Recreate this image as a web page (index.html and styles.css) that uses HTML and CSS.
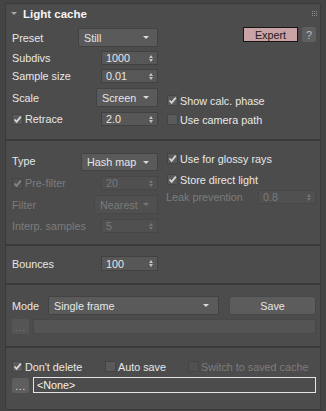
FILE: index.html
```html
<!DOCTYPE html>
<html lang="en">
  <head>
    <meta charset="UTF-8" />
    <title>Light cache</title>
    <link rel="stylesheet" href="styles.css">
  </head>
  <body>
    <div class="panel">
      <div class="rollout-head">
        <span class="caret"></span>
        <span class="title">Light cache</span>
        <svg class="grip" width="5" height="5" viewBox="0 0 5 5">
          <rect x="0" y="0" width="1" height="1" /><rect x="2" y="0" width="1" height="1" /><rect x="4" y="0" width="1" height="1" />
          <rect x="0" y="2" width="1" height="1" /><rect x="2" y="2" width="1" height="1" /><rect x="4" y="2" width="1" height="1" />
          <rect x="0" y="4" width="1" height="1" /><rect x="2" y="4" width="1" height="1" /><rect x="4" y="4" width="1" height="1" />
        </svg>
      </div>

      <!-- basic settings -->
      <div class="section s-basic">
        <div class="col left">
          <div class="field"><span>Preset</span><div class="select w80">Still</div></div>
          <div class="field"><span>Subdivs</span><div class="spinner">1000<span class="arrows"></span></div></div>
          <div class="field"><span>Sample size</span><div class="spinner">0.01<span class="arrows"></span></div></div>
          <div class="field gap5"><span>Scale</span><div class="select w62">Screen</div></div>
          <div class="field gap5">
            <span class="check on"><span class="box"><svg viewBox="0 0 9 9"><path d="M1.5 4.5 L3.6 6.8 L7.8 1.6" /></svg></span>Retrace</span>
            <div class="spinner">2.0<span class="arrows"></span></div>
          </div>
        </div>
        <div class="col right">
          <div class="expert-row">
            <button class="expert">Expert</button>
            <button class="help">?</button>
          </div>
          <span class="check on calc"><span class="box"><svg viewBox="0 0 9 9"><path d="M1.5 4.5 L3.6 6.8 L7.8 1.6" /></svg></span>Show calc. phase</span>
          <span class="check camera"><span class="box"></span>Use camera path</span>
        </div>
      </div>

      <!-- interpolation -->
      <div class="section s-type">
        <div class="col left">
          <div class="field"><span>Type</span><div class="select w76 h18">Hash map</div></div>
          <div class="field gap5 disabled">
            <span class="check on"><span class="box"><svg viewBox="0 0 9 9"><path d="M1.5 4.5 L3.6 6.8 L7.8 1.6" /></svg></span>Pre-filter</span>
            <div class="spinner">20<span class="arrows"></span></div>
          </div>
          <div class="field gap5 disabled"><span>Filter</span><div class="select w64">Nearest</div></div>
          <div class="field gap5 disabled"><span>Interp. samples</span><div class="spinner">5<span class="arrows"></span></div></div>
        </div>
        <div class="col right">
          <span class="check on glossy"><span class="box"><svg viewBox="0 0 9 9"><path d="M1.5 4.5 L3.6 6.8 L7.8 1.6" /></svg></span>Use for glossy rays</span>
          <span class="check on store"><span class="box"><svg viewBox="0 0 9 9"><path d="M1.5 4.5 L3.6 6.8 L7.8 1.6" /></svg></span>Store direct light</span>
          <div class="field leak disabled"><span>Leak prevention</span><div class="spinner w58">0.8<span class="arrows"></span></div></div>
        </div>
      </div>

      <div class="section s-bounces">
        <div class="col left">
          <div class="field"><span>Bounces</span><div class="spinner h15">100<span class="arrows"></span></div></div>
        </div>
      </div>

      <!-- mode / file -->
      <div class="section s-mode">
        <div class="row">
          <span class="mode-label">Mode</span>
          <div class="select mode-select">Single frame</div>
          <button class="save">Save</button>
        </div>
        <div class="row">
          <button class="dots dim">...</button>
          <div class="path"></div>
        </div>
      </div>

      <div class="section s-file">
        <div class="checks">
          <span class="check on"><span class="box"><svg viewBox="0 0 9 9"><path d="M1.5 4.5 L3.6 6.8 L7.8 1.6" /></svg></span>Don't delete</span>
          <span class="check"><span class="box"></span>Auto save</span>
          <span class="check disabled"><span class="box"></span>Switch to saved cache</span>
        </div>
        <div class="row">
          <button class="dots">...</button>
          <div class="path none">&lt;None&gt;</div>
        </div>
      </div>
    </div>
  </body>
</html>
```

FILE: styles.css
```css
body {
  margin: 0;
  background-color: #444444;
  font-family: "Liberation Sans", Arial, sans-serif;
  font-size: 10.8px;
  color: #e8e8e8;
}
button {
  font-family: inherit;
  font-size: inherit;
  padding: 0;
  cursor: pointer;
}
.panel {
  margin: 3px 0 0 5px;
  width: 314px;
  border: 1px solid #3a3a3a;
  background-color: #4c4c4c;
}
.rollout-head {
  height: 21px;
  display: flex;
  align-items: center;
  padding: 0 3px 2px 5px;
  box-sizing: border-box;
}
.caret {
  width: 0;
  height: 0;
  border-left: 3px solid transparent;
  border-right: 3px solid transparent;
  border-top: 3px solid #a8a8a8;
  margin-right: 6px;
}
.title {
  font-weight: bold;
  font-size: 11.5px;
  color: #f4f4f4;
}
.grip {
  margin-left: auto;
  fill: #8c8c8c;
}
.section {
  display: flex;
  border-bottom: 2px solid #3a3a3a;
  padding-left: 6px;
  padding-right: 4px;
}
.section:last-child {
  border-bottom: none;
}
.col {
  display: flex;
  flex-direction: column;
  gap: 4px;
}
.col.left {
  width: 146px;
}
.col.right {
  width: 149px;
  margin-left: 9px;
  gap: 0;
}
.field {
  display: flex;
  align-items: center;
  justify-content: space-between;
}
.field.gap5 {
  margin-top: 1px;
}
.disabled {
  color: #7c7c7c;
}

/* dropdowns and spinners */
.select {
  height: 19px;
  box-sizing: border-box;
  display: flex;
  align-items: center;
  padding: 0 8px 0 5px;
  background-color: #5a5a5a;
  border: 1px solid #424242;
  border-radius: 1px;
  color: #e6e6e6;
}
.select::after {
  content: "";
  margin-left: auto;
  border-left: 3px solid transparent;
  border-right: 3px solid transparent;
  border-top: 3px solid #dadada;
}
.select.w80 { width: 80px; }
.select.w62 { width: 62px; }
.select.w76 { width: 77px; }
.select.w64 { width: 64px; }
.select.h18 { height: 18px; }
.spinner {
  width: 57px;
  height: 14px;
  box-sizing: border-box;
  display: flex;
  align-items: center;
  padding: 0 4px 0 4px;
  background-color: #575757;
  border: 1px solid #414141;
  color: #e6e6e6;
}
.spinner.w58 { width: 58px; }
.spinner.h15 { height: 15px; }
.arrows {
  margin-left: auto;
  display: flex;
  flex-direction: column;
  gap: 1px;
}
.arrows::before,
.arrows::after {
  content: "";
  display: block;
  border-left: 2.5px solid transparent;
  border-right: 2.5px solid transparent;
}
.arrows::before {
  border-bottom: 3px solid #c4c4c4;
}
.arrows::after {
  border-top: 3px solid #c4c4c4;
}
.disabled .select,
.disabled .spinner {
  background-color: #505050;
  border-color: #474747;
  color: #7a7a7a;
}
.disabled .select::after {
  border-top-color: #767676;
}
.disabled .arrows::before {
  border-bottom-color: #767676;
}
.disabled .arrows::after {
  border-top-color: #767676;
}

/* checkboxes */
.check {
  display: flex;
  align-items: center;
  height: 13px;
  white-space: nowrap;
}
.check .box {
  width: 11px;
  height: 11px;
  box-sizing: border-box;
  margin-right: 2px;
  background-color: #5a5a5a;
  border: 1px solid #444444;
  display: flex;
  align-items: center;
  justify-content: center;
}
.check svg {
  width: 9px;
  height: 9px;
  fill: none;
  stroke: #d6d6d6;
  stroke-width: 1.8;
}
.check.disabled .box,
.disabled .check .box {
  background-color: #505050;
}
.disabled .check svg {
  stroke: #858585;
}

/* section 1 */
.s-basic {
  padding-top: 3px;
  padding-bottom: 13px;
}
.s-basic .col.right {
  margin-top: -1px;
}
.expert-row {
  display: flex;
  justify-content: flex-end;
  gap: 4px;
}
.expert {
  width: 55px;
  height: 15px;
  background-color: #c9a3a5;
  border: 1px solid #151515;
  color: #1c1c1c;
}
.help {
  width: 14px;
  height: 15px;
  background-color: #5e5e5e;
  border: none;
  border-radius: 2px;
  color: #bdbdbd;
}
.calc {
  margin-top: 52px;
}
.camera {
  margin-top: 6px;
}

/* section 2 */
.s-type {
  padding-top: 12px;
  padding-bottom: 11px;
}
.s-type .col.left .field:first-child span {
  margin-top: -3px;
}
.glossy {
  margin-top: -1px;
}
.store {
  margin-top: 8px;
}
.leak {
  margin-top: 4px;
  margin-left: -1px;
}

.s-bounces {
  padding-top: 10px;
  padding-bottom: 12px;
}

/* mode and cache file */
.s-mode,
.s-file {
  flex-direction: column;
  gap: 4px;
}
.s-mode {
  padding-top: 11px;
  padding-bottom: 12px;
}
.s-file {
  padding-top: 12px;
  padding-bottom: 16px;
}
.row {
  display: flex;
  align-items: center;
}
.mode-label {
  width: 36px;
}
.mode-select {
  width: 171px;
  padding-left: 5px;
  padding-right: 9px;
}
.save {
  width: 87px;
  height: 19px;
  margin-left: 10px;
  background-color: #5c5c5c;
  border: 1px solid #474747;
  border-radius: 3px;
  color: #e6e6e6;
}
.dots {
  width: 17px;
  height: 15px;
  margin-right: 4px;
  background-color: #5e5e5e;
  border: none;
  border-radius: 2px;
  color: #d8d8d8;
  line-height: 17px;
  letter-spacing: 0.5px;
}
.dots.dim {
  background-color: #555555;
  color: #777777;
}
.path {
  width: 284px;
  height: 15px;
  box-sizing: border-box;
  background-color: #545454;
  border: 1px solid #484848;
}
.path.none {
  height: 16px;
  background-color: #4c4c4c;
  border: 1px solid #e4e4e4;
  padding-left: 3px;
  line-height: 14px;
  color: #f2f2f2;
}
.checks {
  display: grid;
  grid-template-columns: 93px 83px 1fr;
}
```
